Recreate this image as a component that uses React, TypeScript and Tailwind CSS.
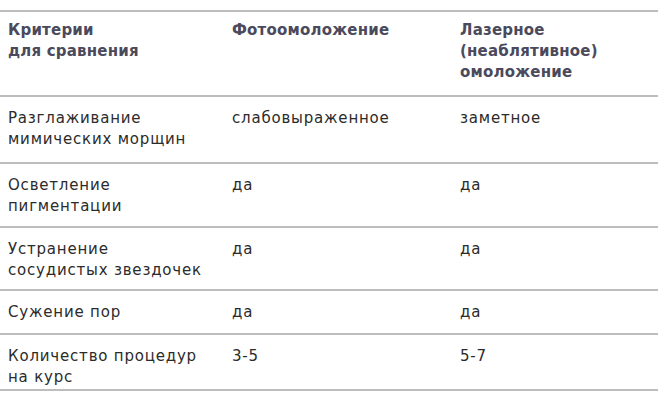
const rows = [
  { h: "h-[67px]", a: ["Разглаживание", "мимических морщин"], b: "слабовыраженное", c: "заметное" },
  { h: "h-[64px]", a: ["Осветление", "пигментации"], b: "да", c: "да" },
  { h: "h-[63px]", a: ["Устранение", "сосудистых звездочек"], b: "да", c: "да" },
  { h: "h-[44px]", a: ["Сужение пор"], b: "да", c: "да" },
  { h: "h-[56px]", a: ["Количество процедур", "на курс"], b: "3-5", c: "5-7" },
]

export default function App() {
  return (
    <div className="w-[658px] h-[400px] bg-white font-['DejaVu_Sans',sans-serif] text-[15px] leading-[21px]">
      <div className="mt-[10px] border-t-2 border-[#bdbdbd]">
        <div className="grid grid-cols-[224px_228px_1fr] h-[85px] border-b-2 border-[#bdbdbd] font-bold text-[#4b4a5c] tracking-[0.2px] pt-[8px]">
          <div className="pl-2">
            Критерии
            <br />
            для сравнения
          </div>
          <div className="pl-2">Фотоомоложение</div>
          <div className="pl-2">
            Лазерное
            <br />
            (неаблятивное)
            <br />
            омоложение
          </div>
        </div>
        {rows.map((r, i) => (
          <div
            key={i}
            className={`grid grid-cols-[224px_228px_1fr] ${r.h} border-b-2 border-[#bdbdbd] text-[#2b2b2b] tracking-[0.8px] pt-[11px]`}
          >
            <div className="pl-2">
              {r.a.map((t, j) => (
                <div key={j}>{t}</div>
              ))}
            </div>
            <div className="pl-2">{r.b}</div>
            <div className="pl-2">{r.c}</div>
          </div>
        ))}
      </div>
    </div>
  )
}
